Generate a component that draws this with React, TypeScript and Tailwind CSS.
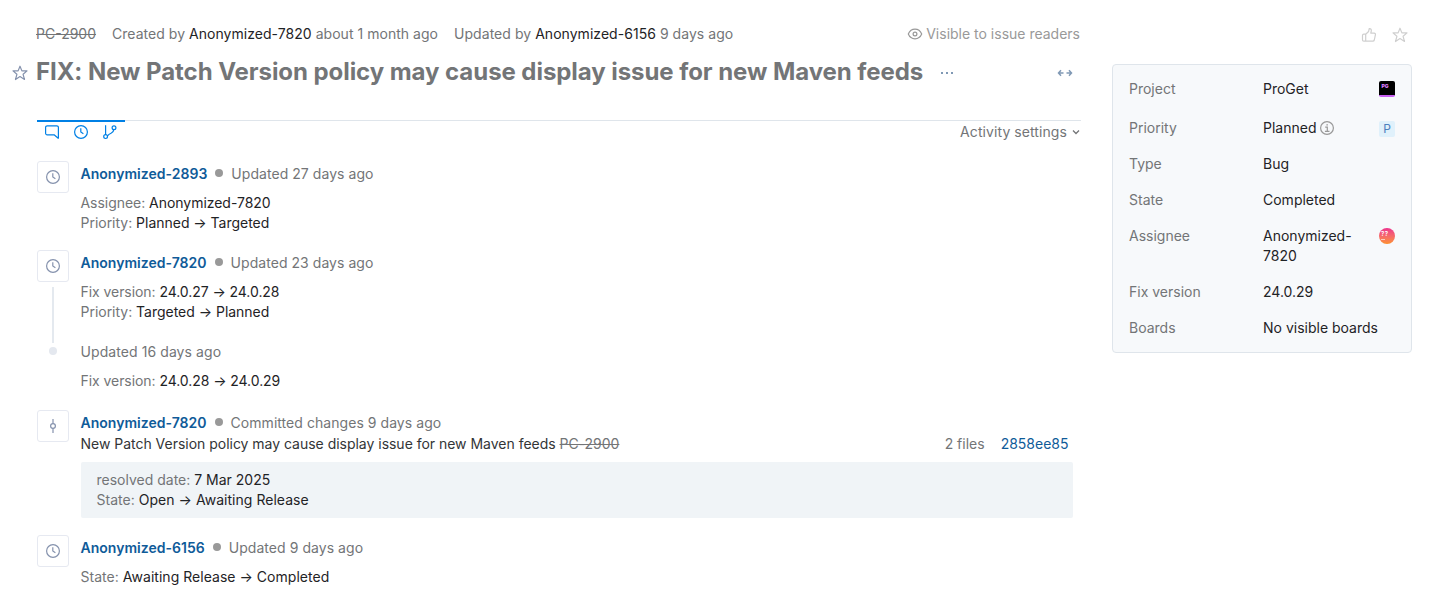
import type { ReactNode } from 'react';

type IconProps = { className?: string };

function Svg({ className = '', children }: { className?: string; children: ReactNode }) {
  return (
    <svg
      width="16"
      height="16"
      viewBox="0 0 16 16"
      fill="none"
      stroke="currentColor"
      strokeWidth="1.2"
      className={`block shrink-0 ${className}`}
    >
      {children}
    </svg>
  );
}

const Star = ({ className }: IconProps) => (
  <Svg className={className}>
    <path d="M8 1.2 9.9 5.9H15L11.1 9.3 12.5 14.5 8 11.6 3.5 14.5 4.9 9.3 1 5.9H6.1Z" strokeLinejoin="round" />
  </Svg>
);

const Clock = ({ className }: IconProps) => (
  <Svg className={className}>
    <circle cx="8" cy="8" r="6.4" />
    <path d="M7.8 4.2V8L10.4 9.8" />
  </Svg>
);

const Comment = ({ className }: IconProps) => (
  <Svg className={className}>
    <path d="M14.4 14.2V3.4a1.6 1.6 0 0 0-1.6-1.6H3.2A1.6 1.6 0 0 0 1.6 3.4v5.8a1.6 1.6 0 0 0 1.6 1.6h6.9l4.1 3.4Z" strokeLinejoin="round" />
  </Svg>
);

const Branch = ({ className }: IconProps) => (
  <Svg className={className}>
    <circle cx="3.6" cy="12.6" r="1.9" />
    <circle cx="12" cy="3.7" r="1.9" />
    <path d="M3.6 1.2V10.7M11.8 5.6C11.4 10 8.3 8.2 5.5 11.9" />
  </Svg>
);

const Commit = ({ className }: IconProps) => (
  <Svg className={className}>
    <circle cx="8" cy="8" r="2.4" />
    <path d="M8 1V5.6M8 10.4V15" />
  </Svg>
);

const Eye = ({ className }: IconProps) => (
  <Svg className={className}>
    <path d="M1.3 8C2.6 5 5.1 3.2 8 3.2S13.4 5 14.7 8C13.4 11 10.9 12.8 8 12.8S2.6 11 1.3 8Z" />
    <circle cx="8" cy="8" r="1.9" />
  </Svg>
);

const ThumbsUp = ({ className }: IconProps) => (
  <Svg className={className}>
    <path
      d="M4.7 7.2V14.2M4.7 7.2 7.6 4.5 8.2 1.6C9.8 1.3 10.5 2.6 10.3 3.8L9.8 6.1H13.1C14.2 6.1 14.6 6.9 14.4 7.8L13.3 13C13.1 13.8 12.6 14.2 11.8 14.2H2.8C2 14.2 1.5 13.7 1.5 13V8.4C1.5 7.6 2 7.2 2.8 7.2H4.7Z"
      strokeLinejoin="round"
    />
  </Svg>
);

const Info = ({ className }: IconProps) => (
  <Svg className={className}>
    <circle cx="8" cy="8" r="6.4" />
    <path d="M6.2 7.1H8.3V11.2M5.9 11.3H10.5M7.4 4.9H8.9" />
  </Svg>
);

const Expand = ({ className }: IconProps) => (
  <Svg className={className}>
    <path d="M4 5.2 1.5 8 4 10.8M1.5 8H6.5M12 5.2 14.5 8 12 10.8M14.5 8H9.5" strokeWidth="1.5" />
  </Svg>
);

const More = ({ className }: IconProps) => (
  <Svg className={className}>
    <path d="M2 8H4M7 8H9M12 8H14" strokeWidth="2" />
  </Svg>
);

const Chevron = ({ className = '' }: IconProps) => (
  <svg width="10" height="10" viewBox="0 0 10 10" fill="none" stroke="currentColor" strokeWidth="1.3" className={`block ${className}`}>
    <path d="M2 3.5 5 6.5 8 3.5" />
  </svg>
);

const Dark = ({ children }: { children: ReactNode }) => <span className="text-[#1f2326]">{children}</span>;

function Change({ name, from, to, className = '' }: { name: string; from: string; to?: string; className?: string }) {
  return (
    <div className={className}>
      {name}: <Dark>{to ? `${from} → ${to}` : from}</Dark>
    </div>
  );
}

function Entry({
  icon,
  author,
  action,
  line,
  className = '',
  children,
}: {
  icon: ReactNode;
  author: string;
  action: string;
  line?: boolean;
  className?: string;
  children: ReactNode;
}) {
  return (
    <section className={`flex ${className}`}>
      <div className="mr-3 flex w-8 shrink-0 flex-col items-center">
        <div className="flex size-8 items-center justify-center rounded-[3px] border border-[#e6e9f1] text-[#8592ad]">
          {icon}
        </div>
        {line && (
          <>
            <div className="mt-[5px] h-14 w-0.5 bg-[#e4e9ef]" />
            <div className="mt-1 size-2 rounded-full bg-[#e4e8ef]" />
          </>
        )}
      </div>
      <div className="min-w-0 flex-1 pt-[3px]">
        <div className="-ml-[0.5px] flex items-center">
          <span className="font-semibold tracking-[0.02px] text-[#0f5b99]">{author}</span>
          <span className="mr-2 mb-0.5 ml-2 size-2 rounded-full bg-[#999]" />
          <span className="tracking-[0.05px]">{action}</span>
        </div>
        {children}
      </div>
    </section>
  );
}

function Field({ label, value, badge, className = 'mb-4' }: { label: string; value: ReactNode; badge?: ReactNode; className?: string }) {
  return (
    <div className={`flex items-start ${className}`}>
      <span className="w-[134px] shrink-0">{label}</span>
      <div className="w-[116px] text-[#1f2326]">{value}</div>
      {badge}
    </div>
  );
}

export default function App() {
  return (
    <div className="flex h-[609px] w-[1439px] overflow-hidden bg-white font-['Inter',sans-serif] text-[14px] leading-5 text-[#737577]">
      <main className="w-[1081px] pt-6 pl-9">
        <div className="flex pr-px">
          <span className="mr-4 line-through">PC-2900</span>
          <span className="mr-4 tracking-[0.035px]">
            Created by <Dark>Anonymized-7820</Dark> about 1 month ago
          </span>
          <span className="tracking-[0.04px]">
            Updated by <Dark>Anonymized-6156</Dark> 9 days ago
          </span>
          <span className="ml-auto flex items-center gap-[3px] text-[#999]">
            <Eye />
            Visible to issue readers
          </span>
        </div>

        <div className="mt-3 -ml-6 flex h-8 items-center">
          <Star className="mt-0.5 mr-2 text-[#8592ad]" />
          <h1 className="text-[24px] leading-8 font-bold tracking-[-0.06px] whitespace-nowrap">
            FIX: New Patch Version policy may cause display issue for new Maven feeds
          </h1>
          <More className="mt-0.5 ml-[15.5px] text-[#8099b5]" />
          <Expand className="mt-0.5 mr-2 ml-auto text-[#8099b5]" />
        </div>

        <div className="mt-8 ml-px flex h-[22px] items-start justify-between border-t border-[#dfe5eb]">
          <div className="-mt-px flex h-[23px] w-[88px] gap-[13px] border-t-2 border-[#0080e5] pt-0.5 pl-[7px] text-[#0080e5]">
            <Comment />
            <Clock />
            <Branch />
          </div>
          <div className="flex items-center gap-1 pt-px tracking-[0.08px]">
            Activity settings
            <Chevron />
          </div>
        </div>

        <div className="mt-[19px] ml-px">
          <Entry icon={<Clock />} author="Anonymized-2893" action="Updated 27 days ago" className="h-[89px]">
            <div className="mt-[9px] -ml-[0.5px]">
              <Change name="Assignee" from="Anonymized-7820" className="tracking-[-0.04px]" />
              <Change name="Priority" from="Planned" to="Targeted" className="tracking-[-0.02px]" />
            </div>
          </Entry>
          <Entry icon={<Clock />} author="Anonymized-7820" action="Updated 23 days ago" line className="h-40">
            <div className="mt-[9px] -ml-[0.5px]">
              <Change name="Fix version" from="24.0.27" to="24.0.28" className="tracking-[-0.06px]" />
              <Change name="Priority" from="Targeted" to="Planned" className="tracking-[-0.02px]" />
            </div>
            <div className="mt-5 -ml-[0.5px] tracking-[0.08px]">Updated 16 days ago</div>
            <div className="mt-[9px] -ml-[0.5px]">
              <Change name="Fix version" from="24.0.28" to="24.0.29" className="tracking-[-0.06px]" />
            </div>
          </Entry>
          <Entry icon={<Commit />} author="Anonymized-7820" action="Committed changes 9 days ago" className="h-[125px]">
            <div className="mt-px -ml-[0.5px] flex pr-[12.5px]">
              <span className="tracking-[-0.02px] text-[#333537]">
                New Patch Version policy may cause display issue for new Maven feeds{' '}
                <span className="text-[#737577] line-through">PC-2900</span>
              </span>
              <span className="mr-4 ml-auto">2 files</span>
              <span className="text-[#0f5b99]">2858ee85</span>
            </div>
            <div className="mt-2 mr-2 h-14 rounded-[2px] bg-[#f0f4f7] py-2 pr-4 pl-[15.5px]">
              <Change name="resolved date" from="7 Mar 2025" />
              <Change name="State" from="Open" to="Awaiting Release" className="tracking-[0.03px]" />
            </div>
          </Entry>
          <Entry icon={<Clock />} author="Anonymized-6156" action="Updated 9 days ago">
            <div className="mt-[9px] -ml-[0.5px]">
              <Change name="State" from="Awaiting Release" to="Completed" className="tracking-[0.03px]" />
            </div>
          </Entry>
        </div>
      </main>

      <aside className="ml-[31px] w-[300px] pt-[27px]">
        <div className="flex h-4 justify-end gap-[15px] pr-1 text-[#cfcfcf]">
          <ThumbsUp />
          <Star />
        </div>
        <div className="mt-[21px] h-[289px] rounded border border-[#dfe5eb] bg-[#f7f9fb] px-4 pt-3.5">
          <Field
            label="Project"
            value="ProGet"
            className="mb-[19px]"
            badge={
              <span className="mt-0.5 size-4 overflow-hidden rounded-[2px] border-b-2 border-[#c95ff2] bg-black pt-[2px] pl-[2.5px] text-[5px] leading-[6px] font-black text-[#dc7dff]">
                PG
              </span>
            }
          />
          <Field
            label="Priority"
            value={
              <span className="flex items-center gap-[3px]">
                Planned
                <Info className="text-[#999]" />
              </span>
            }
            badge={
              <span className="mt-[3px] -mb-px size-4 rounded-[2px] bg-[#e0f1fb] text-center text-[12px] leading-4 text-[#4d7fbd]">
                P
              </span>
            }
          />
          <Field label="Type" value="Bug" />
          <Field label="State" value="Completed" />
          <Field
            label="Assignee"
            value={
              <>
                Anonymized-
                <br />
                7820
              </>
            }
            badge={
              <span className="mt-0.5 size-4 overflow-hidden rounded-full bg-linear-to-b from-[#ed318c] to-[#fd9029] pt-[2.5px] pl-[2px] text-[6px] leading-[6px] font-semibold tracking-[0.5px] text-white">
                ??
                <span className="mt-[2px] block h-px w-1 bg-white/60" />
              </span>
            }
          />
          <Field label="Fix version" value="24.0.29" />
          <Field label="Boards" value="No visible boards" />
        </div>
      </aside>
    </div>
  );
}
